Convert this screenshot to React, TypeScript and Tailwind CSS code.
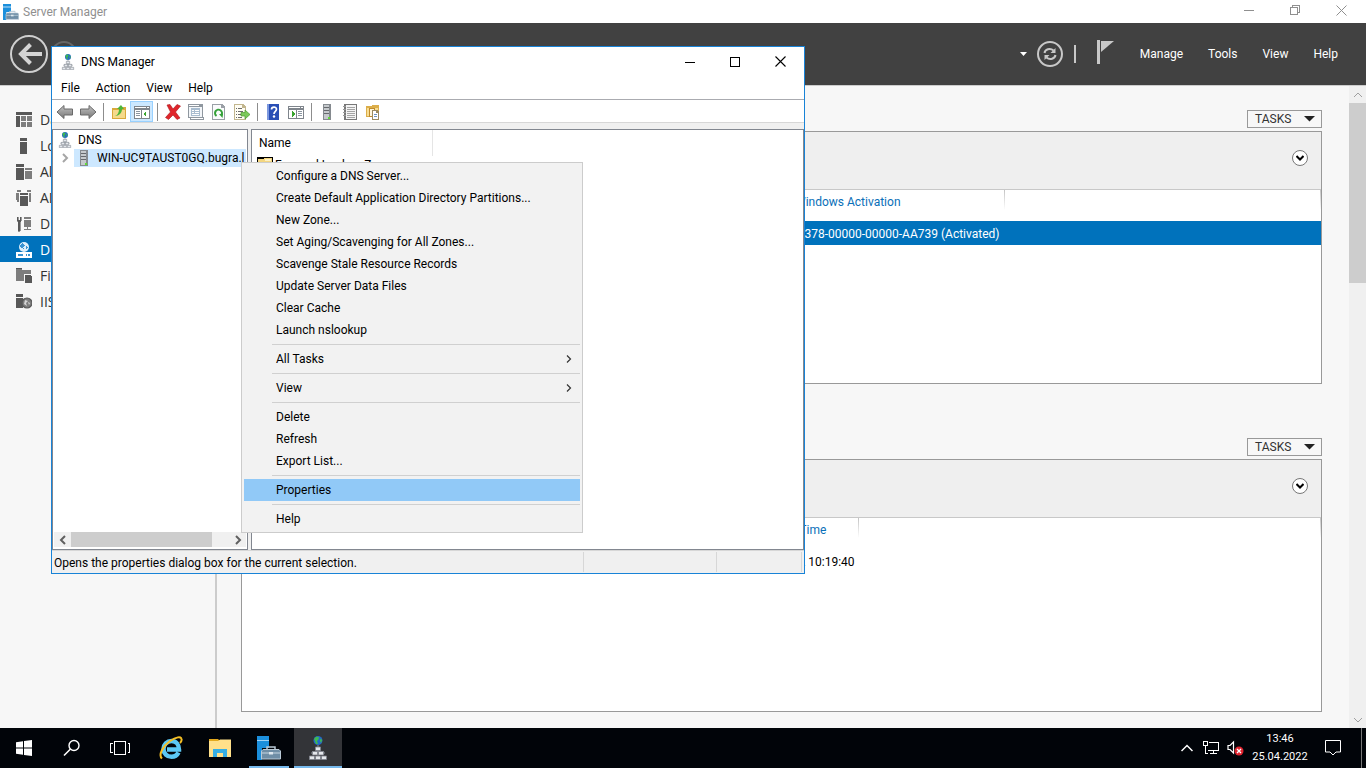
import { useState } from "react";
import type { ReactNode } from "react";

const navItems = [
  "Dashboard",
  "Local Server",
  "All Servers",
  "AD DS",
  "DHCP",
  "DNS",
  "File and Storage Services",
  "IIS",
];

type MenuEntry = { label: string; sub?: boolean };

const menuGroups: MenuEntry[][] = [
  [
    { label: "Configure a DNS Server..." },
    { label: "Create Default Application Directory Partitions..." },
    { label: "New Zone..." },
    { label: "Set Aging/Scavenging for All Zones..." },
    { label: "Scavenge Stale Resource Records" },
    { label: "Update Server Data Files" },
    { label: "Clear Cache" },
    { label: "Launch nslookup" },
  ],
  [{ label: "All Tasks", sub: true }],
  [{ label: "View", sub: true }],
  [{ label: "Delete" }, { label: "Refresh" }, { label: "Export List..." }],
  [{ label: "Properties" }],
  [{ label: "Help" }],
];

/* ===================== ICONS ===================== */

function Pix({ children, size = 16 }: { children: ReactNode; size?: number }) {
  return (
    <svg width={size} height={size} viewBox="0 0 16 16" shapeRendering="crispEdges" className="block shrink-0">
      {children}
    </svg>
  );
}

function Chevron({ dir, color = "#606060", weight = 2 }: { dir: "up" | "down" | "left" | "right"; color?: string; weight?: number }) {
  const d = {
    up: "M1 7L5 3L9 7",
    down: "M1 3L5 7L9 3",
    left: "M7 1L3 5L7 9",
    right: "M3 1L7 5L3 9",
  }[dir];
  return (
    <svg width="10" height="10" viewBox="0 0 10 10" fill="none" className="block shrink-0">
      <path d={d} stroke={color} strokeWidth={weight} />
    </svg>
  );
}

function ServerManagerIcon({ size = 16 }: { size?: number }) {
  return (
    <svg width={size} height={size} viewBox="0 0 24 24" className="block">
      <path d="M0 0H12V4H0Z M0 5H12V12H5V24H0Z" fill="#1b8fdc" />
      <path d="M0 4H12V5H0Z" fill="#9ed2f5" />
      <path d="M10 13V11H18V13" fill="none" stroke="#b9c9d6" strokeWidth="1.5" />
      <path d="M6 13.500H22L23.500 15V23H4.500V15Z" fill="#6f8ea6" stroke="#b9c9d6" />
      <path d="M5 17H12M16 17H23" stroke="#c7d6e1" />
      <path d="M12 16H16V18.500H12Z" fill="#dde7ee" />
    </svg>
  );
}

function DnsIcon({ size = 16 }: { size?: number }) {
  return (
    <svg width={size} height={size} viewBox="0 0 18 24" className="block shrink-0">
      <circle cx="9" cy="4.500" r="4.500" fill="#2468c6" />
      <path d="M5 3L7 0.800L10 1L9.500 3.500L8 5L9 8L7 8L6 5Z M11.500 2.500L13.200 4L12 7L11 5Z" fill="#3fb950" />
      <path d="M9 9V23M3 18V16H15V18" stroke="#8a8f98" fill="none" />
      <path d="M6.500 11H11.500V14.500H6.500Z M3.500 15.500H8.500V19H3.500Z M9.500 15.500H14.500V19H9.500Z M0.500 20H5.500V23.500H0.500Z M6.500 20H11.500V23.500H6.500Z M12.500 20H17.500V23.500H12.500Z" fill="#e4e7ec" stroke="#7d828b" strokeWidth="0.8" />
    </svg>
  );
}

function TowerIcon() {
  return (
    <Pix>
      <path d="M4 0H12V16H4Z" fill="#858a8f" />
      <path d="M5 1H10V15H5Z" fill="#c5c9cc" />
      <path d="M5 3H10V4H5Z M5 6H10V7H5Z M5 9H10V10H5Z" fill="#66696d" />
      <path d="M9 13H11V15H9Z" fill="#5fd938" />
    </Pix>
  );
}

function NavIcon({ name }: { name: string }) {
  const g = "#585858";
  const l = "#7d7d7d";
  switch (name) {
    case "Dashboard":
      return (
        <Pix>
          <path d="M0 0H16V3H0Z M0 4H4V15H0Z" fill={g} />
          <path d="M5 4H10V9H5Z M11 4H16V9H11Z M5 10H10V15H5Z M11 10H16V15H11Z" fill={l} />
        </Pix>
      );
    case "Local Server":
      return (
        <Pix>
          <path d="M4 0H11V3H4Z M4 4H11V16H4Z" fill={g} />
        </Pix>
      );
    case "All Servers":
      return (
        <Pix>
          <path d="M0 0H8V3H0Z M0 4H8V16H0Z" fill={g} />
          <path d="M9 4H16V6H9Z M9 7H16V15H9Z" fill={l} />
        </Pix>
      );
    case "AD DS":
      return (
        <Pix>
          <path d="M1 0H5V2H1Z M11 0H15V2H11Z M0 3H3V12H1V10H0Z M13 3H15V12H13Z" fill={l} />
          <path d="M4 3H12V5H4Z M4 6H12V16H4Z" fill={g} />
        </Pix>
      );
    case "DHCP":
      return (
        <Pix>
          <path d="M1 1H2V4H4V1H5V5L4 6V15H2V6L1 5Z" fill={g} stroke={g} strokeWidth="0.6" />
          <path d="M8 1H15V3H8Z M8 4H15V11H8Z M11 11H12V13H11Z M8 13H15V14H8Z" fill={l} />
        </Pix>
      );
    case "DNS":
      return (
        <Pix>
          <circle cx="8" cy="5" r="5" fill="#ddeefa" shapeRendering="auto" />
          <path d="M6 1L9 3L7 5L8 7L5 6L4 3Z M10 4L12 5L10 8Z" fill="#3a93d2" />
          <path d="M0 10H16V16H0Z" fill="#fff" />
          <path d="M2 12H7V14H2Z M10 12H11V14H10Z M12 12H14V14H12Z" fill="#3a93d2" />
        </Pix>
      );
    case "IIS":
      return (
        <Pix>
          <path d="M0 0H7V3H0Z M0 4H7V14H0Z" fill={g} />
          <g shapeRendering="auto">
            <circle cx="11" cy="9" r="5" fill={l} stroke={g} strokeWidth="1.2" />
            <path d="M9 6L12 7L10 9L11 12L8 10Z M12 8L14 9L13 11Z" fill="#d6d6d6" />
          </g>
        </Pix>
      );
    default:
      return (
        <Pix>
          <path d="M0 0H6V2H15V6H8V13H0Z" fill={l} />
          <path d="M0 0H6V1H0Z" fill={g} />
          <path d="M9 7H14L16 9V15H9Z" fill={g} />
        </Pix>
      );
  }
}

function ArrowIcon({ flip }: { flip?: boolean }) {
  return (
    <svg width="18" height="16" viewBox="0 0 18 16" className={flip ? "block -scale-x-100" : "block"}>
      <defs>
        <linearGradient id="steel" x1="0" y1="0" x2="0" y2="1">
          <stop offset="0" stopColor="#c2c2c2" />
          <stop offset="1" stopColor="#777" />
        </linearGradient>
      </defs>
      <path d="M1 8L8 1.500V5H16.500V11H8V14.500Z" fill="url(#steel)" stroke="#6a6a6a" strokeLinejoin="round" />
    </svg>
  );
}

function FolderUpIcon() {
  return (
    <Pix>
      <path d="M1 4H8V3H15V15H1Z" fill="#d9a93c" />
      <path d="M2 6H14V14H2Z" fill="#f6d98b" />
      <path d="M4 12C7 11 8 8 8 5H6L10 1L13 5H11C11 9 8 12 4 12Z" fill="#4db53a" shapeRendering="auto" />
    </Pix>
  );
}

function PaneIcon({ side }: { side: "left" | "right" }) {
  return (
    <Pix>
      <path d="M0 2H16V15H0Z" fill="#7f858c" />
      <path d="M1 3H12V4H1Z M13 3H15V4H13Z" fill="#fff" />
      <path d="M1 6H15V14H1Z" fill="#fff" />
      {side === "left" ? (
        <>
          <path d="M7 6H8V14H7Z" fill="#7f858c" />
          <path d="M2 7H6V8H2Z M2 9H6V10H2Z M2 11H6V12H2Z" fill="#8b95a0" />
          <path d="M12 7V13L9 10Z" fill="#3aa52f" />
        </>
      ) : (
        <>
          <path d="M8 6H9V14H8Z" fill="#7f858c" />
          <path d="M10 7H14V8H10Z M10 9H14V10H10Z M10 11H14V12H10Z" fill="#8b95a0" />
          <path d="M4 7V13L7 10Z" fill="#3aa52f" />
        </>
      )}
    </Pix>
  );
}

function DeleteIcon() {
  return (
    <svg width="16" height="16" viewBox="0 0 16 16" className="block">
      <path d="M2 1L5 0.500L8 5L12 0.500L15.500 2L10.500 8L15 14L12 15.500L8 11L3.500 15.500L0.500 13.500L5.500 8Z" fill="#e0252b" stroke="#a9161b" strokeWidth="0.6" />
    </svg>
  );
}

function PropsIcon() {
  return (
    <Pix>
      <path d="M0 0H15V13H16V16H2V14H0Z" fill="#8f979f" />
      <path d="M1 3H14V13H1Z" fill="#f3f6f9" />
      <path d="M1 1H11V2H1Z M3 14H15V15H3Z" fill="#fff" />
      <path d="M3 4H12V12H3Z" fill="#a8bccf" />
      <path d="M4 6H6V7H4Z M7 6H11V7H7Z M4 8H6V9H4Z M7 8H11V9H7Z M4 10H11V11H4Z" fill="#fff" />
    </Pix>
  );
}

function RefreshPageIcon() {
  return (
    <Pix>
      <path d="M1 0H11L14 3V16H1Z" fill="#9aa0a6" />
      <path d="M2 1H10V4H13V15H2Z" fill="#fafbfc" />
      <path d="M5.500 12A3.500 3.500 0 1 1 10.500 11" fill="none" stroke="#35a139" strokeWidth="2" shapeRendering="auto" />
      <path d="M8 10H12L11.500 14Z" fill="#35a139" shapeRendering="auto" />
    </Pix>
  );
}

function ExportIcon() {
  return (
    <Pix>
      <path d="M0 0H9L12 3V16H0Z" fill="#c2b68e" />
      <path d="M1 1H8V4H11V15H1Z" fill="#fffdf3" />
      <path d="M2 4H3V5H2Z M4 4H8V5H4Z M2 7H3V8H2Z M4 7H9V8H4Z M2 10H3V11H2Z M4 10H7V11H4Z M2 13H3V14H2Z M4 13H8V14H4Z" fill="#6b6b6b" />
      <path d="M7 8.500H11V6L16 10.500L11 15V12H7Z" fill="#7cc95a" stroke="#4a9a2c" strokeWidth="0.7" shapeRendering="auto" />
    </Pix>
  );
}

function HelpBookIcon() {
  return (
    <svg width="16" height="16" viewBox="0 0 16 16" className="block">
      <path d="M2 0H14V16H2Z" fill="#2a4fb5" />
      <path d="M2 0H4V16H2Z" fill="#7c98de" />
      <path d="M6.500 5.500C6.500 2.300 11.500 2.300 11.500 5.300C11.500 7.300 9 7.300 9 10" fill="none" stroke="#fff" strokeWidth="1.700" />
      <circle cx="9" cy="12.500" r="1.200" fill="#fff" />
    </svg>
  );
}

function ListIcon() {
  return (
    <Pix>
      <path d="M2 0H15V16H2Z" fill="#777" />
      <path d="M4 1H14V15H4Z" fill="#f4f4f4" />
      <path d="M5 3H13V4H5Z M5 5H13V6H5Z M5 7H13V8H5Z M5 9H13V10H5Z M5 11H13V12H5Z M5 13H13V14H5Z" fill="#a4a4a4" />
      <path d="M1 2H4V3H1Z M1 5H4V6H1Z M1 8H4V9H1Z M1 11H4V12H1Z" fill="#999" />
    </Pix>
  );
}

function CopyFolderIcon() {
  return (
    <Pix>
      <path d="M1 2H6L7 1H14V13H1Z" fill="#dcae4a" />
      <path d="M2 4H13V12H2Z" fill="#f8dd92" />
      <path d="M4 4H10V13H4Z" fill="#c08b2c" />
      <path d="M5 5H9V12H5Z" fill="#fff6dc" />
      <path d="M7 6H12L14 8V16H7Z" fill="#9a8a5e" />
      <path d="M8 7H11V9H13V15H8Z" fill="#fff" />
      <path d="M9 10H12V11H9Z M9 12H12V13H9Z" fill="#6d94bd" />
    </Pix>
  );
}

function RefreshIcon() {
  return (
    <svg width="26" height="26" viewBox="0 0 26 26" fill="none" className="block">
      <circle cx="13" cy="13" r="12" stroke="#c8c8c8" strokeWidth="2" />
      <path d="M7.500 12C8 8.500 13 6.500 16.500 9.500M18.500 14C18 17.500 13 19.500 9.500 16.500" stroke="#c8c8c8" strokeWidth="2" />
      <path d="M18.500 7V12H13.500Z M7.500 19V14H12.500Z" fill="#c8c8c8" />
    </svg>
  );
}

/* ===================== SERVER MANAGER ===================== */

type PanelProps = { column: string; value: string; selected?: boolean; cols: ReactNode };

const columnLine =
  "bg-linear-to-b from-[#c4c4c4] to-white bg-[length:1px_20px] bg-[position:right_top] bg-no-repeat";

function Panel({ column, value, selected, cols }: PanelProps) {
  return (
    <section className="flex flex-1 flex-col">
      <button
        type="button"
        className="flex h-[18px] w-[75px] items-center justify-between self-end border border-[#999] pr-[6px] pl-[7px] text-xs text-[#333]"
      >
        TASKS
        <svg width="11" height="6" viewBox="0 0 11 6">
          <path d="M0 0H11L5.500 5.500Z" fill="#222" />
        </svg>
      </button>
      <div className="mt-[3px] flex-1 border border-[#999] bg-white">
        <div className="flex h-[58px] items-center justify-end border-b border-[#c8c8c8] bg-[#efefef] pr-[13px]">
          <button
            type="button"
            aria-label="Expand"
            className="mb-[6px] flex size-4 items-center justify-center rounded-full border border-[#777] bg-white"
          >
            <svg width="8" height="6" viewBox="0 0 8 6" fill="none">
              <path d="M0.500 1L4 4.500L7.500 1" stroke="#000" strokeWidth="2" />
            </svg>
          </button>
        </div>
        <table className="w-full table-fixed text-left text-xs">
          {cols}
          <thead>
            <tr className="h-[31px] align-top leading-6 text-[#0a6fb8]">
              <td />
              <th className={`py-0 pr-0 pl-1 font-normal whitespace-nowrap ${columnLine}`}>{column}</th>
              <td className={columnLine} />
            </tr>
          </thead>
          <tbody>
            <tr className={selected ? "h-6 bg-[#0072bc] text-white" : "h-6 text-black"}>
              <td />
              <td className="px-0 pt-px pb-0 whitespace-nowrap">{value}</td>
              <td />
            </tr>
          </tbody>
        </table>
      </div>
    </section>
  );
}

function ServerManager() {
  return (
    <>
      <header className="flex h-[23px] items-center justify-between bg-white pr-[2px] pl-[3px] text-xs text-[#8f8f8f]">
        <div className="flex items-center gap-1">
          <ServerManagerIcon />
          Server Manager
        </div>
        <div className="flex h-full pb-[3px]">
          <button type="button" aria-label="Minimize" className="flex w-[46px] items-center justify-center">
            <svg width="10" height="10" viewBox="0 0 10 10" shapeRendering="crispEdges">
              <path d="M0 5H10V6H0Z" fill="#8f8f8f" />
            </svg>
          </button>
          <button type="button" aria-label="Restore" className="flex w-[46px] items-center justify-center">
            <svg width="10" height="10" viewBox="0 0 10 10" fill="none" shapeRendering="crispEdges">
              <path d="M0.500 2.500H7.500V9.500H0.500Z M2.500 2.500V0.500H9.500V7.500H7.500" stroke="#8f8f8f" />
            </svg>
          </button>
          <button type="button" aria-label="Close" className="flex w-[46px] items-center justify-center">
            <svg width="11" height="11" viewBox="0 0 11 11">
              <path d="M0.500 0.500L10.500 10.500M10.500 0.500L0.500 10.500" stroke="#8f8f8f" />
            </svg>
          </button>
        </div>
      </header>

      <div className="flex h-[63px] items-center justify-between border-b border-[#ccc] bg-[#414141] pr-7 pl-[10px]">
        <div className="flex items-center gap-[3px]">
          <button type="button" aria-label="Back">
            <svg width="38" height="38" viewBox="0 0 38 38" fill="none" className="block">
              <circle cx="19" cy="19" r="18" stroke="#cfcfcf" strokeWidth="2" />
              <path d="M32 19H11M20.500 9.500L11 19L20.500 28.500" stroke="#d4d4d4" strokeWidth="4" />
            </svg>
          </button>
          <button type="button" aria-label="Forward" disabled>
            <svg width="26" height="26" viewBox="0 0 26 26" fill="none" className="block">
              <circle cx="13" cy="13" r="12" stroke="#666" strokeWidth="2" />
            </svg>
          </button>
        </div>
        <div className="flex items-center text-xs text-white">
          <svg width="7" height="4" viewBox="0 0 7 4">
            <path d="M0 0H7L3.500 4Z" fill="#fff" />
          </svg>
          <button type="button" aria-label="Refresh" className="ml-[10px]">
            <RefreshIcon />
          </button>
          <div className="ml-[11px] h-[18px] w-[2px] bg-[#c8c8c8]" />
          <button type="button" aria-label="Notifications" className="ml-[21px]">
            <svg width="17" height="24" viewBox="0 0 17 24" className="mb-1 block">
              <path d="M0 0H3V24H0Z" fill="#c8c8c8" />
              <path d="M4 1H17L4 12Z" fill="#c8c8c8" />
            </svg>
          </button>
          <nav className="ml-[26px] flex gap-[25px]">
            <a href="#manage">Manage</a>
            <a href="#tools">Tools</a>
            <a href="#view">View</a>
            <a href="#help">Help</a>
          </nav>
        </div>
      </div>

      <div className="flex flex-1 bg-[#f7f7f7]">
        <nav className="w-[217px] shrink-0 border-r-2 border-[#ccc] pt-5 font-['Open_Sans',sans-serif]">
          {navItems.map((name) => (
            <a
              key={name}
              href="#"
              className={
                name === "DNS"
                  ? "flex h-[26px] items-center gap-2 bg-[#0072bc] pt-px pl-4 text-sm text-white"
                  : "flex h-[26px] items-center gap-2 pt-px pl-4 text-sm text-[#333]"
              }
            >
              <NavIcon name={name} />
              {name}
            </a>
          ))}
        </nav>
        <main className="flex flex-1 flex-col gap-[54px] pt-6 pr-[27px] pb-4 pl-6">
          <Panel
            column="Windows Activation"
            value="00378-00000-00000-AA739 (Activated)"
            selected
            cols={
              <colgroup>
                <col className="w-[549px]" />
                <col className="w-[214px]" />
                <col />
              </colgroup>
            }
          />
          <Panel
            column="Date and Time"
            value="25.04.2022 10:19:40"
            cols={
              <colgroup>
                <col className="w-[503px]" />
                <col className="w-[114px]" />
                <col />
              </colgroup>
            }
          />
        </main>
        <div className="flex w-[17px] shrink-0 flex-col items-center bg-[#f0f0f0]">
          <div className="flex h-[17px] items-center">
            <Chevron dir="up" color="#a0a0a0" weight={1} />
          </div>
          <div className="h-[180px] w-full bg-[#cdcdcd]" />
          <div className="mt-auto flex h-[17px] items-center">
            <Chevron dir="down" color="#a0a0a0" weight={1} />
          </div>
        </div>
      </div>
    </>
  );
}

/* ===================== DNS MANAGER WINDOW ===================== */

function Tool({ label, active, children }: { label: string; active?: boolean; children: ReactNode }) {
  return (
    <button
      type="button"
      aria-label={label}
      className={
        active
          ? "flex w-[23px] items-center justify-center border border-[#99d1ff] bg-[#cce8ff]"
          : "flex w-[23px] items-center justify-center"
      }
    >
      {children}
    </button>
  );
}

function ToolGap() {
  return (
    <div className="flex w-2 items-center justify-center">
      <div className="h-[18px] w-px bg-[#8d8d8d]" />
    </div>
  );
}

function ContextMenu() {
  const [current, setCurrent] = useState("Properties");
  return (
    <div
      role="menu"
      className="absolute top-[162px] left-[241px] w-[342px] border border-[#ccc] bg-[#f2f2f2] p-[2px] text-xs text-black"
    >
      {menuGroups.map((group, i) => (
        <div key={i}>
          {i > 0 && <div className="my-[3px] ml-7 h-px bg-[#d0d0d0]" />}
          {group.map((item) => (
            <button
              key={item.label}
              type="button"
              role="menuitem"
              onMouseEnter={() => setCurrent(item.label)}
              className={
                current === item.label
                  ? "flex h-[22px] w-full items-center justify-between bg-[#91c9f7] pr-[6px] pl-8"
                  : "flex h-[22px] w-full items-center justify-between pr-[6px] pl-8"
              }
            >
              {item.label}
              {item.sub && (
                <svg width="10" height="8" viewBox="0 0 10 8" fill="none">
                  <path d="M3 0.500L6.500 4L3 7.500" stroke="#333" strokeWidth="1.200" />
                </svg>
              )}
            </button>
          ))}
        </div>
      ))}
    </div>
  );
}

function DnsWindow() {
  return (
    <div className="absolute top-[46px] left-[51px] flex h-[528px] w-[754px] flex-col border border-[#1883d7] bg-white text-xs text-black">
      <div className="flex h-[30px] items-center justify-between pl-2">
        <div className="flex items-center gap-[5px]">
          <DnsIcon />
          DNS Manager
        </div>
        <div className="flex h-full pb-px">
          <button type="button" aria-label="Minimize" className="flex w-[45px] items-center justify-center">
            <svg width="10" height="10" viewBox="0 0 10 10" shapeRendering="crispEdges">
              <path d="M0 5H10V6H0Z" fill="#000" />
            </svg>
          </button>
          <button type="button" aria-label="Maximize" className="flex w-[45px] items-center justify-center">
            <svg width="10" height="10" viewBox="0 0 10 10" fill="none" shapeRendering="crispEdges">
              <path d="M0.500 0.500H9.500V9.500H0.500Z" stroke="#000" />
            </svg>
          </button>
          <button type="button" aria-label="Close" className="flex w-[47px] items-center justify-center">
            <svg width="11" height="11" viewBox="0 0 11 11">
              <path d="M0.500 0.500L10.500 10.500M10.500 0.500L0.500 10.500" stroke="#000" strokeWidth="1.100" />
            </svg>
          </button>
        </div>
      </div>

      <nav className="flex h-[22px] items-center gap-4 pl-[9px]">
        <button type="button">File</button>
        <button type="button">Action</button>
        <button type="button">View</button>
        <button type="button">Help</button>
      </nav>

      <div className="flex h-6 border-t border-b border-t-[#aaabb0] border-b-[#d7d7d7] pt-px pl-px">
        <Tool label="Back"><ArrowIcon /></Tool>
        <Tool label="Forward"><ArrowIcon flip /></Tool>
        <ToolGap />
        <Tool label="Up one level"><FolderUpIcon /></Tool>
        <Tool label="Show console tree" active><PaneIcon side="left" /></Tool>
        <ToolGap />
        <Tool label="Delete"><DeleteIcon /></Tool>
        <Tool label="Properties"><PropsIcon /></Tool>
        <Tool label="Refresh"><RefreshPageIcon /></Tool>
        <Tool label="Export list"><ExportIcon /></Tool>
        <ToolGap />
        <Tool label="Help"><HelpBookIcon /></Tool>
        <Tool label="Show action pane"><PaneIcon side="right" /></Tool>
        <ToolGap />
        <Tool label="New server"><TowerIcon /></Tool>
        <Tool label="Record list"><ListIcon /></Tool>
        <Tool label="New zone"><CopyFolderIcon /></Tool>
      </div>

      <div className="flex flex-1 gap-[3px] bg-[#f0f0f0] pt-[6px]">
        <div className="flex w-[196px] shrink-0 flex-col border border-[#828790] bg-white px-px pb-[2px]">
          <div className="flex-1 pt-px">
            <div className="flex h-[18px] items-center gap-[5px] pl-[3px]">
              <DnsIcon />
              DNS
            </div>
            <div className="flex h-[18px] items-center">
              <div className="flex w-5 justify-center pr-px pl-[2px]">
                <Chevron dir="right" color="#a6a6a6" />
              </div>
              <div className="flex h-full flex-1 items-center gap-[5px] overflow-hidden bg-[#cde8ff] pl-[2px] whitespace-nowrap">
                <TowerIcon />
                <span>WIN-UC9TAUST0GQ.bugra.l</span>
              </div>
            </div>
          </div>
          <div className="flex h-[15px] items-center bg-[#f0f0f0]">
            <div className="flex w-[17px] justify-center">
              <Chevron dir="left" />
            </div>
            <div className="h-full w-[141px] bg-[#cdcdcd]" />
            <div className="ml-auto flex w-[17px] justify-center">
              <Chevron dir="right" />
            </div>
          </div>
        </div>

        <div className="flex-1 border border-[#828790] bg-white">
          <div className="flex h-[26px] items-center">
            <div className="flex h-full w-[181px] items-center border-r border-[#e5e5e5] pl-[7px]">Name</div>
          </div>
          <div className="flex h-[18px] items-center gap-[2px] pl-[5px]">
            <Pix>
              <path d="M0 0H16V16H0Z" fill="#000" />
              <path d="M1 2H6L7 1H15V15H1Z" fill="#f4d67f" />
              <path d="M8 2H14V4H8Z" fill="#fdf0c4" />
            </Pix>
            Forward Lookup Zones
          </div>
        </div>
      </div>

      <footer className="flex h-[23px] items-center border-t border-[#d7d7d7] bg-[#f0f0f0] px-[2px]">
        <div className="flex-1 pt-px">Opens the properties dialog box for the current selection.</div>
        <div className="h-5 w-[133px] border-l border-[#d7d7d7]" />
        <div className="h-5 w-[86px] border-x border-[#d7d7d7]" />
      </footer>
    </div>
  );
}

/* ===================== TASKBAR ===================== */

function Taskbar() {
  return (
    <footer className="flex h-10 items-stretch justify-between bg-[#010409] text-white">
      <div className="flex">
        <button type="button" aria-label="Start" className="flex w-12 items-center justify-center">
          <svg width="16" height="16" viewBox="0 0 16 16">
            <path d="M0 2.300L7 1.300V7.500H0Z M8 1.100L16 0V7.500H8Z M0 8.500H7V14.700L0 13.700Z M8 8.500H16V16L8 14.900Z" fill="#fff" />
          </svg>
        </button>
        <button type="button" aria-label="Search" className="flex w-12 items-center justify-center">
          <svg width="18" height="18" viewBox="0 0 18 18" fill="none">
            <circle cx="11" cy="6.500" r="5" stroke="#fff" strokeWidth="1.400" />
            <path d="M7.500 10L1 16.500" stroke="#fff" strokeWidth="1.600" />
          </svg>
        </button>
        <button type="button" aria-label="Task view" className="flex w-12 items-center justify-center">
          <svg width="20" height="14" viewBox="0 0 20 14" fill="none" shapeRendering="crispEdges">
            <path d="M4.500 0.500H15.500V13.500H4.500Z M2.500 2.500H0.500V11.500H2.500 M17.500 2.500H19.500V11.500H17.500" stroke="#fff" />
          </svg>
        </button>
        <div className="ml-[3px] flex gap-px">
          <button type="button" aria-label="Internet Explorer" className="flex w-12 items-center justify-center">
            <svg width="24" height="24" viewBox="0 0 24 24" fill="none">
              <path d="M19.500 16.500C18 19.500 15.500 20.800 12.500 20.800C8 20.800 4.500 17.500 4.500 13C4.500 8.500 8 5 12.500 5C17 5 20 8.500 20 13.500H8" stroke="#5cc8f4" strokeWidth="4.500" />
              <path d="M3 22.500C-1 19 4 10 11 5C17 1 22 0 22.500 3C22.800 4 22 6 21 7" stroke="#f5bf25" strokeWidth="2" />
            </svg>
          </button>
          <button type="button" aria-label="File Explorer" className="flex w-12 items-center justify-center">
            <svg width="22" height="20" viewBox="0 0 22 20">
              <path d="M0 1H9L11 3H0Z" fill="#e3a91d" />
              <path d="M0 3L9 3L11 1.500H22V19H0Z" fill="#ffe08a" />
              <path d="M4 19V11H18V19H14V15H8V19Z" fill="#35aee4" />
            </svg>
          </button>
          <button
            type="button"
            aria-label="Server Manager"
            className="flex w-12 flex-col items-center justify-between pt-2"
          >
            <ServerManagerIcon size={24} />
            <div className="h-[2px] w-10 bg-[#76b9ed]" />
          </button>
          <button
            type="button"
            aria-label="DNS Manager"
            className="flex w-12 flex-col items-center justify-between bg-[#333438] pt-2"
          >
            <DnsIcon size={24} />
            <div className="h-[2px] w-full bg-[#76b9ed]" />
          </button>
        </div>
      </div>

      <div className="flex">
        <button type="button" aria-label="Show hidden icons" className="flex w-6 items-center justify-center">
          <svg width="12" height="8" viewBox="0 0 12 8" fill="none">
            <path d="M0.500 7L6 1.500L11.500 7" stroke="#fff" strokeWidth="1.500" />
          </svg>
        </button>
        <button type="button" aria-label="Network" className="flex w-6 items-center justify-center">
          <svg width="16" height="14" viewBox="0 0 16 14" fill="none" shapeRendering="crispEdges">
            <path d="M5.500 1.500H15.500V9.500H4.500 M10.500 9.500V12.500 M7 12.500H14 M2.500 5V12.500H5 M0.500 0.500H4.500V4.500H0.500Z" stroke="#fff" />
          </svg>
        </button>
        <button type="button" aria-label="Volume muted" className="flex w-6 items-center justify-center">
          <svg width="17" height="16" viewBox="0 0 17 16" fill="none">
            <path d="M1 5.500H3L6.500 2V13L3 9.500H1Z" stroke="#fff" strokeWidth="1.200" />
            <circle cx="12" cy="11" r="4.500" fill="#e0242f" />
            <path d="M10 9L14 13M14 9L10 13" stroke="#fff" strokeWidth="1.300" />
          </svg>
        </button>
        <div className="flex w-[66px] flex-col items-center justify-center text-[11px] leading-[18px]">
          <time>13:46</time>
          <time>25.04.2022</time>
        </div>
        <button type="button" aria-label="Action center" className="flex w-10 items-center justify-center">
          <svg width="16" height="16" viewBox="0 0 16 16" fill="none">
            <path d="M0.500 0.500H15.500V12H11L8 15L5 12H0.500Z" stroke="#fff" />
          </svg>
        </button>
        <div className="ml-2 w-[5px] border-l border-[#777]" />
      </div>
    </footer>
  );
}

export default function App() {
  return (
    <div className="relative flex min-h-screen flex-col overflow-hidden bg-white font-['Roboto','Open_Sans',sans-serif]">
      <ServerManager />
      <Taskbar />
      <DnsWindow />
      <ContextMenu />
    </div>
  );
}
